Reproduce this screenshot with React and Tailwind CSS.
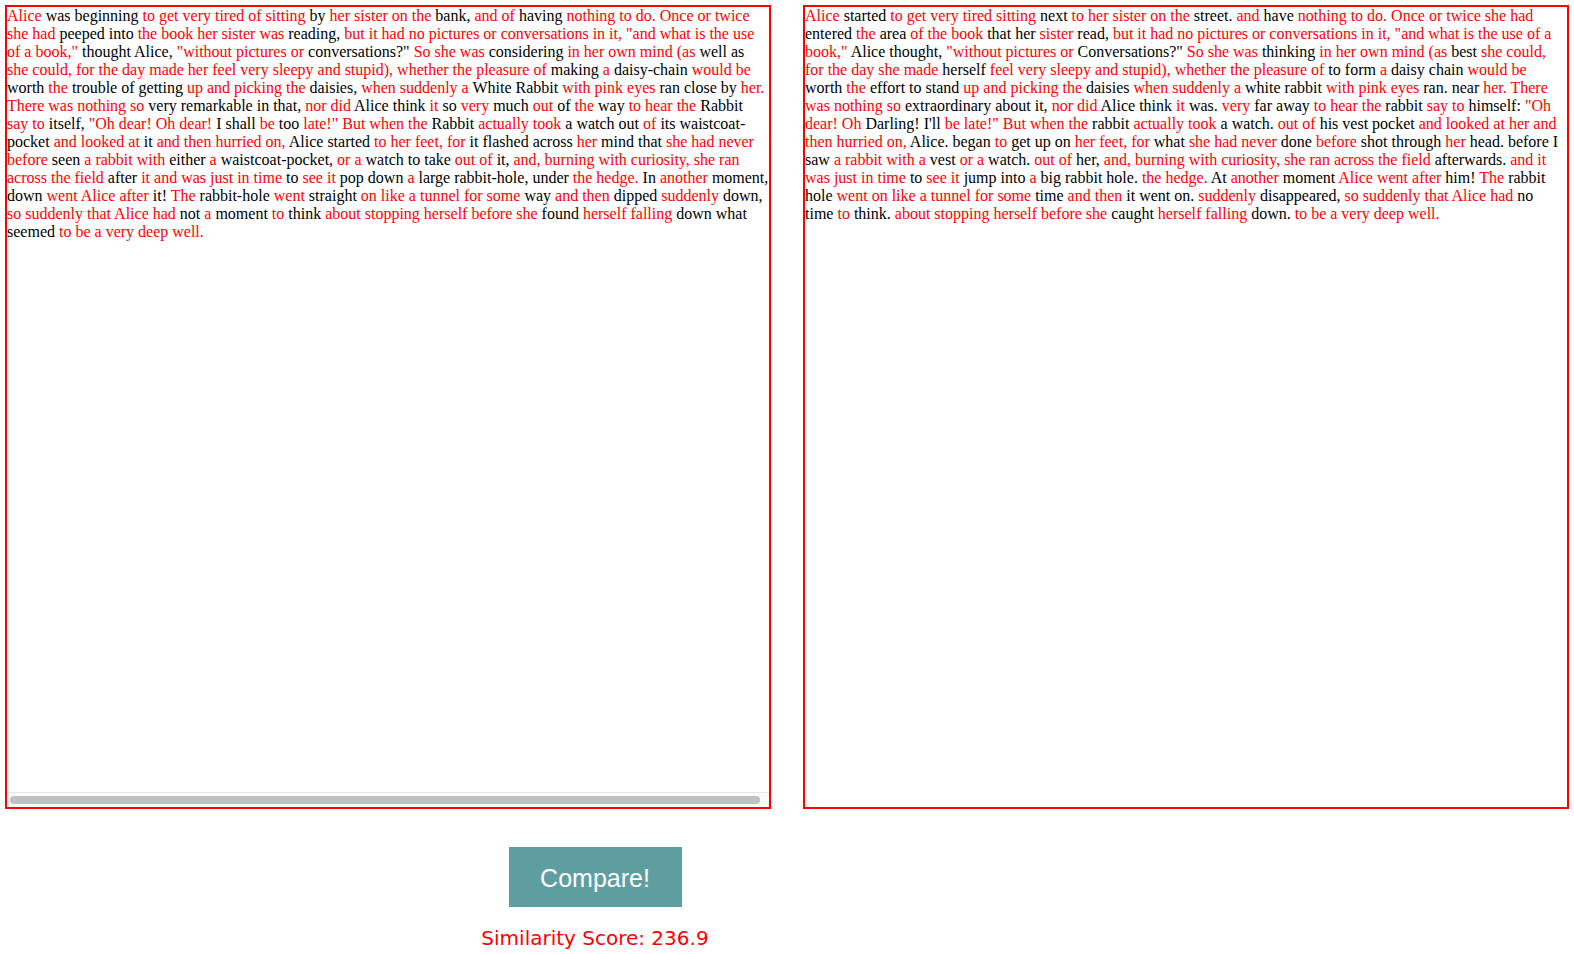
// {…} marks a red run; lines are broken where the reference breaks them
const leftLines = [
  '{Alice} was beginning {to get very tired of sitting} by {her sister on the} bank, {and of} having {nothing to do. Once or twice}',
  '{she had} peeped into {the book her sister was} reading, {but it had no pictures or conversations in it, "and what is the use}',
  '{of a book,"} thought Alice, {"without pictures or} conversations?" {So she was} considering {in her own mind (as} well as',
  '{she could, for the day made her feel very sleepy and stupid), whether the pleasure of} making {a} daisy-chain {would be}',
  'worth {the} trouble of getting {up and picking the} daisies, {when suddenly a} White Rabbit {with pink eyes} ran close by {her.}',
  '{There was nothing so} very remarkable in that, {nor did} Alice think {it} so {very} much {out} of {the} way {to hear the} Rabbit',
  '{say to} itself, {"Oh dear! Oh dear!} I shall {be} too {late!" But when the} Rabbit {actually took} a watch out {of} its waistcoat-',
  'pocket {and looked at} it {and then hurried on,} Alice started {to her feet, for} it flashed across {her} mind that {she had never}',
  '{before} seen {a rabbit with} either {a} waistcoat-pocket, {or a} watch to take {out of} it, {and, burning with curiosity, she ran}',
  '{across the field} after {it and was just in time} to {see it} pop down {a} large rabbit-hole, under {the hedge.} In {another} moment,',
  'down {went Alice after} it! {The} rabbit-hole {went} straight {on like a tunnel for some} way {and then} dipped {suddenly} down,',
  '{so suddenly that Alice had} not {a} moment {to} think {about stopping herself before she} found {herself falling} down what',
  'seemed {to be a very deep well.}',
];

const rightLines = [
  '{Alice} started {to get very tired sitting} next {to her sister on the} street. {and} have {nothing to do. Once or twice she had}',
  'entered {the} area {of the book} that her {sister} read, {but it had no pictures or conversations in it, "and what is the use of a}',
  '{book,"} Alice thought, {"without pictures or} Conversations?" {So she was} thinking {in her own mind (as} best {she could,}',
  '{for the day she made} herself {feel very sleepy and stupid), whether the pleasure of} to form {a} daisy chain {would be}',
  'worth {the} effort to stand {up and picking the} daisies {when suddenly a} white rabbit {with pink eyes} ran. near {her. There}',
  '{was nothing so} extraordinary about it, {nor did} Alice think {it} was. {very} far away {to hear the} rabbit {say to} himself: {"Oh}',
  '{dear! Oh} Darling! I\'ll {be late!" But when the} rabbit {actually took} a watch. {out of} his vest pocket {and looked at her and}',
  '{then hurried on,} Alice. began {to} get up on {her feet, for} what {she had never} done {before} shot through {her} head. before I',
  'saw {a rabbit with a} vest {or a} watch. {out of} her, {and, burning with curiosity, she ran across the field} afterwards. {and it}',
  '{was just in time} to {see it} jump into {a} big rabbit hole. {the hedge.} At {another} moment {Alice went after} him! {The} rabbit',
  'hole {went on like a tunnel for some} time {and then} it went on. {suddenly} disappeared, {so suddenly that Alice had} no',
  'time {to} think. {about stopping herself before she} caught {herself falling} down. {to be a very deep well.}',
];

function Line({ text }) {
  const parts = text.split(/(\{[^}]*\})/).filter(Boolean);
  return (
    <div className="whitespace-pre">
      {parts.map((p, i) =>
        p.startsWith("{") ? (
          <span key={i} className="text-[#ff0000]">{p.slice(1, -1)}</span>
        ) : (
          <span key={i}>{p}</span>
        )
      )}
    </div>
  );
}

function Passage({ lines }) {
  return (
    <div className="text-[16px] leading-[18px] text-black">
      {lines.map((l, i) => (
        <Line key={i} text={l} />
      ))}
    </div>
  );
}

export default function App() {
  return (
    <div className="min-h-screen bg-white p-[5px] font-['Liberation_Serif',serif]">
      <div className="flex gap-[32px]">
        <div className="w-[766px] h-[804px] border-2 border-[#ff0000] flex flex-col overflow-hidden">
          <div className="flex-1">
            <Passage lines={leftLines} />
          </div>
          {/* horizontal scrollbar */}
          <div className="h-[15px] border-t border-[#e6e6e6] bg-[#fafafa] pl-[3px] pr-[9px] pt-[3px]">
            <div className="h-[8px] rounded-full bg-[#c1c1c1]" />
          </div>
        </div>
        <div className="w-[766px] h-[804px] border-2 border-[#ff0000] overflow-hidden">
          <Passage lines={rightLines} />
        </div>
      </div>

      <div className="w-[1180px] flex flex-col items-center mt-[38px]">
        <button className="w-[173px] h-[60px] bg-[#5f9ea0] text-white text-[25px] pt-[4px] font-['Liberation_Sans',Arial,sans-serif]">
          Compare!
        </button>
        <div className="mt-[19px] text-[20px] leading-[24px] text-[#ff0000] font-['DejaVu_Sans',Verdana,sans-serif]">
          Similarity Score: 236.9
        </div>
      </div>
    </div>
  );
}
